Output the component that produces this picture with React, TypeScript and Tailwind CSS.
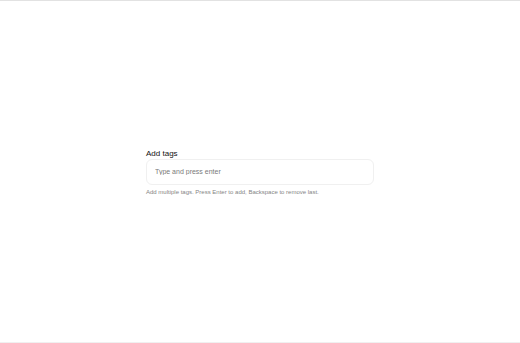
import React, { useState } from "react";

export default function App() {
  const [tags, setTags] = useState<string[]>([]);
  const [value, setValue] = useState<string>("");

  const handleKeyDown = (e: React.KeyboardEvent<HTMLInputElement>) => {
    if (e.key === "Enter" && value.trim()) {
      setTags((prev) => [...prev, value.trim()]);
      setValue("");
    } else if (e.key === "Backspace" && !value) {
      setTags((prev) => prev.slice(0, -1));
    }
  };

  return (
    <div
      className="w-[520px] h-[343px] bg-white border-t border-[#e2e2e2] border-b border-b-[#f0f0f0] flex justify-center pt-[148px]"
      style={{ fontFamily: "'Liberation Sans', Arial, sans-serif" }}
    >
      <div className="w-[228px] flex flex-col">
        <label htmlFor="tags" className="text-[8px] leading-[10px] text-[#111]">
          Add tags
        </label>
        <div className="flex flex-wrap items-center gap-1 h-[26px] rounded-[6px] border border-[#f0f0f0] px-[8px]">
          {tags.map((tag, index) => (
            <span key={index} className="text-[7px] bg-gray-100 rounded px-1">
              {tag}
            </span>
          ))}
          <input
            id="tags"
            className="flex-1 outline-none text-[7px] text-[#333] placeholder:text-[#7a7a7a] bg-transparent"
            placeholder="Type and press enter"
            value={value}
            onChange={(e) => setValue(e.target.value)}
            onKeyDown={handleKeyDown}
          />
        </div>
        <p className="mt-[2px] text-[6px] leading-[10px] text-[#858585]">
          Add multiple tags. Press Enter to add, Backspace to remove last.
        </p>
      </div>
    </div>
  );
}
